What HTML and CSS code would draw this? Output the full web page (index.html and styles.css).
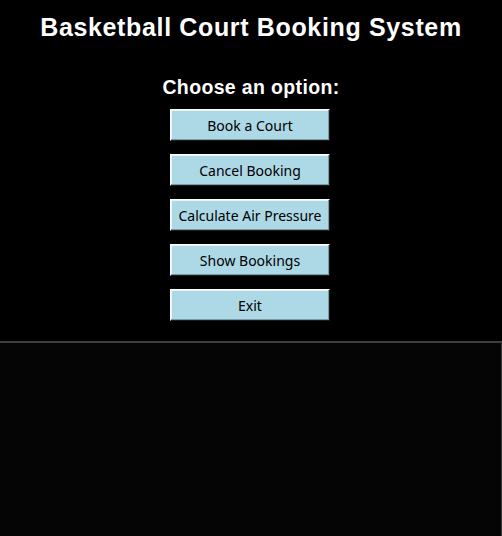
FILE: index.html
```html
<!DOCTYPE html>
<html lang="en">
<head>
<meta charset="utf-8">
<title>Basketball Court Booking System</title>
<link rel="stylesheet" href="styles.css">
</head>
<body>
<div class="app">
  <div class="menu">
    <h1 class="title">Basketball Court Booking System</h1>
    <h2 class="subtitle">Choose an option:</h2>
    <div class="buttons">
      <button class="btn">Book a Court</button>
      <button class="btn">Cancel Booking</button>
      <button class="btn">Calculate Air Pressure</button>
      <button class="btn">Show Bookings</button>
      <button class="btn">Exit</button>
    </div>
  </div>
  <div class="output"></div>
</div>
</body>
</html>
```

FILE: styles.css
```css
html, body {
  margin: 0;
  padding: 0;
  height: 100%;
  background: #000;
}
.app {
  display: flex;
  flex-direction: column;
  height: 536px;
  width: 502px;
}
.menu {
  display: flex;
  flex-direction: column;
  align-items: center;
  height: 341px;
  flex: none;
}
.title {
  margin: 13px 0 0 0;
  font-family: "Liberation Sans", Arial, sans-serif;
  font-weight: bold;
  font-size: 25px;
  letter-spacing: 0.65px;
  line-height: 28px;
  color: #fff;
}
.subtitle {
  margin: 35px 0 0 0;
  font-family: "Liberation Sans", Arial, sans-serif;
  font-weight: bold;
  font-size: 19.5px;
  letter-spacing: 0.35px;
  line-height: 22px;
  color: #fff;
}
.buttons {
  display: flex;
  flex-direction: column;
  gap: 13px;
  margin: 11px 2px 0 0;
}
.btn {
  box-sizing: border-box;
  width: 160px;
  height: 32px;
  margin: 0;
  padding: 0;
  background: #add8e6;
  color: #000;
  font-family: "Noto Sans", "Open Sans", sans-serif;
  font-size: 14px;
  border: 1px solid;
  border-color: #ffffff #1a1a1a #1a1a1a #ffffff;
  box-shadow: inset -1px -1px 0 #7a9aa5, inset 1px 1px 0 #e6f4f8;
}
.output {
  flex: 1;
  background: #050505;
  border-top: 2px solid #3f3f3f;
  border-right: 1px solid #3a3a3a;
}
```
